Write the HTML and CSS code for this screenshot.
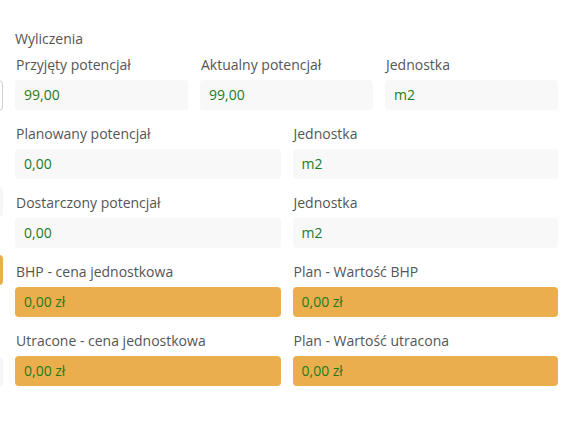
FILE: index.html
```html
<!DOCTYPE html>
<html lang="pl">
<head>
<meta charset="utf-8">
<link rel="stylesheet" href="styles.css">
</head>
<body>
<div class="page">
  <div class="edge">
    <div class="stub stub-bordered"></div>
    <div class="stub stub-faint stub-2"></div>
    <div class="stub stub-orange stub-3"></div>
    <div class="stub stub-faint stub-4"></div>
  </div>
  <div class="main">
    <div class="title">Wyliczenia</div>
    <div class="row cols-3">
      <div class="field">
        <div class="label">Przyjęty potencjał</div>
        <div class="value">99,00</div>
      </div>
      <div class="field">
        <div class="label">Aktualny potencjał</div>
        <div class="value">99,00</div>
      </div>
      <div class="field">
        <div class="label">Jednostka</div>
        <div class="value">m2</div>
      </div>
    </div>
    <div class="row cols-2">
      <div class="field">
        <div class="label">Planowany potencjał</div>
        <div class="value">0,00</div>
      </div>
      <div class="field">
        <div class="label">Jednostka</div>
        <div class="value">m2</div>
      </div>
    </div>
    <div class="row cols-2">
      <div class="field">
        <div class="label">Dostarczony potencjał</div>
        <div class="value">0,00</div>
      </div>
      <div class="field">
        <div class="label">Jednostka</div>
        <div class="value">m2</div>
      </div>
    </div>
    <div class="row cols-2">
      <div class="field">
        <div class="label">BHP - cena jednostkowa</div>
        <div class="value value-warn">0,00 zł</div>
      </div>
      <div class="field">
        <div class="label">Plan - Wartość BHP</div>
        <div class="value value-warn">0,00 zł</div>
      </div>
    </div>
    <div class="row cols-2">
      <div class="field">
        <div class="label">Utracone - cena jednostkowa</div>
        <div class="value value-warn">0,00 zł</div>
      </div>
      <div class="field">
        <div class="label">Plan - Wartość utracona</div>
        <div class="value value-warn">0,00 zł</div>
      </div>
    </div>
  </div>
</div>
</body>
</html>
```

FILE: styles.css
```css
html, body {
  margin: 0;
  padding: 0;
  background: #ffffff;
}
body {
  font-family: "Open Sans", "Noto Sans", sans-serif;
  font-size: 14px;
  line-height: 21px;
  color: #555555;
}
.page {
  display: flex;
  align-items: flex-start;
}
.edge {
  width: 4px;
  flex: none;
  overflow: hidden;
  padding-top: 80px;
}
.stub {
  width: 20px;
  height: 30px;
  margin-left: -17px;
  border-radius: 4px;
  box-sizing: border-box;
}
.stub-bordered {
  border: 1px solid #cfcfcf;
  background: #ffffff;
  height: 31px;
}
.stub-faint {
  background: #f6f6f6;
}
.stub-2 { margin-top: 76px; }
.stub-3 { margin-top: 38px; }
.stub-4 { margin-top: 72px; }
.stub-orange {
  background: #eaaf4c;
}
.main {
  width: 543px;
  padding-left: 11px;
  padding-top: 28px;
}
.title {
  margin-bottom: 5px;
}
.row {
  display: grid;
  column-gap: 12px;
  margin-bottom: 13px;
}
.cols-3 { grid-template-columns: repeat(3, 1fr); }
.cols-2 { grid-template-columns: repeat(2, 1fr); }
.label {
  padding-left: 1px;
  margin-bottom: 5px;
  white-space: nowrap;
}
.value {
  height: 30px;
  line-height: 30px;
  padding: 0 9px;
  background: #f8f8f8;
  border-radius: 4px;
  color: #1f7a1f;
}
.value-warn {
  background: #eaaf4c;
}
```
